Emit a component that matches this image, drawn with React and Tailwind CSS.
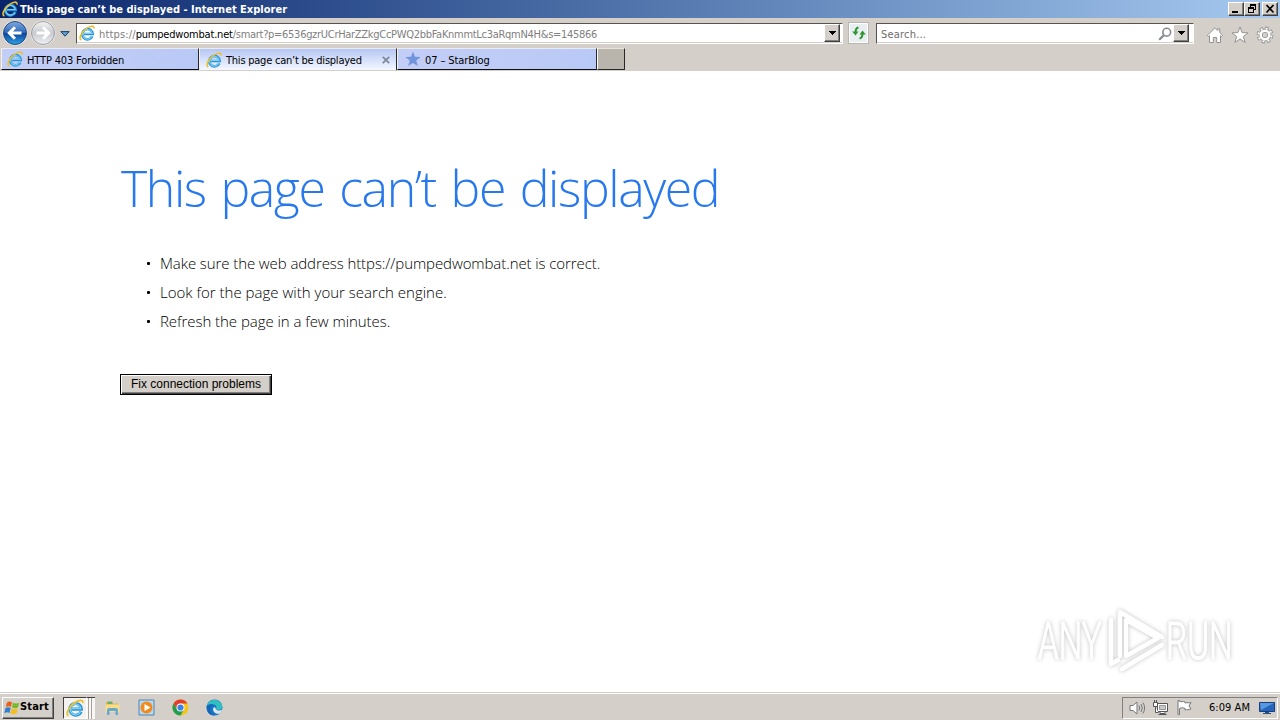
import clsx from "clsx";

const TAHOMA = "font-['DejaVu_Sans_Condensed','DejaVu_Sans',sans-serif]";
const RAISED =
  "bg-[#d4cfc9] border border-t-white border-l-white border-r-[#404040] border-b-[#404040] shadow-[inset_-1px_-1px_0_#808080]";

const suggestions = [
  { text: "Make sure the web address https://pumpedwombat.net is correct.", spacing: "tracking-[-0.09px]" },
  { text: "Look for the page with your search engine.", spacing: "tracking-[0.01px]" },
  { text: "Refresh the page in a few minutes.", spacing: "tracking-[-0.05px]" },
];

function IeLogo({ className }) {
  return (
    <svg viewBox="0 0 16 16" className={clsx("shrink-0", className)} fill="none">
      <path d="M13.300 11.200A5.200 5.200 0 1 1 13.700 9H5" stroke="#2b93d6" strokeWidth="2.700" />
      <path d="M13 10.900A4.800 4.800 0 1 1 13.200 8.500H5" stroke="#79cff5" strokeWidth="1.200" />
      <path d="M2.300 15C-.4 13.800 1.600 8 6.600 4 10.600.8 15.500-.2 15 3.600" stroke="#ecc130" strokeWidth="1.600" />
    </svg>
  );
}

function NavButton({ forward }) {
  return (
    <svg viewBox="0 0 26 26" className="size-[26px] shrink-0">
      <defs>
        <linearGradient id="backFill" x2="0" y2="1">
          <stop offset="0" stopColor="#7fa9de" />
          <stop offset=".48" stopColor="#2f6abb" />
          <stop offset=".52" stopColor="#0d4399" />
          <stop offset="1" stopColor="#2ba4ea" />
        </linearGradient>
        <linearGradient id="forwardFill" x2="0" y2="1">
          <stop offset="0" stopColor="#f4f4f4" />
          <stop offset=".5" stopColor="#c8cacf" />
          <stop offset="1" stopColor="#eef0f2" />
        </linearGradient>
      </defs>
      <circle cx="13" cy="13" r="12.5" fill="#f3f1ee" />
      <circle
        cx="13"
        cy="13"
        r="11.5"
        fill={forward ? "url(#forwardFill)" : "url(#backFill)"}
        stroke={forward ? "#989ba1" : "#27477e"}
      />
      <path
        d="M13 7.3 7.300 13l5.700 5.700M8 13H19.500"
        fill="none"
        stroke="#fff"
        strokeWidth="3"
        transform={forward ? "matrix(-1 0 0 1 26 0)" : undefined}
      />
    </svg>
  );
}

function DropButton() {
  return (
    <button className={clsx("flex h-[18px] w-[16px] shrink-0 items-center justify-center", RAISED)}>
      <svg viewBox="0 0 7 4" className="h-[4px] w-[7px]" shapeRendering="crispEdges">
        <path d="M0 0h7v1H6v1H5v1H4v1H3V3H2V2H1V1H0z" />
      </svg>
    </button>
  );
}

function TitleBar() {
  return (
    <header className="flex h-[18px] items-center bg-linear-to-r from-[#0a246a] to-[#a6caf0] pl-[2px] pr-[2px]">
      <IeLogo className="size-4" />
      <h1 className="ml-[2px] grow whitespace-nowrap pt-px text-[11px] font-bold leading-[17px] tracking-[0.01px] text-white">
        This page can’t be displayed - Internet Explorer
      </h1>
      <div className="flex">
        <button className={clsx("h-[14px] w-[16px]", RAISED)}>
          <svg viewBox="0 0 14 12" className="h-[12px] w-[14px]" shapeRendering="crispEdges">
            <path d="M3 8h6v2H3z" />
          </svg>
        </button>
        <button className={clsx("h-[14px] w-[16px]", RAISED)}>
          <svg viewBox="0 0 14 12" className="h-[12px] w-[14px]" shapeRendering="crispEdges">
            <path d="M5 1h6v6H9V6h1V3H6v1H5zM3 4h6v6H3zM4 6v3h4V6z" fillRule="evenodd" />
          </svg>
        </button>
        <button className={clsx("ml-[2px] h-[14px] w-[16px]", RAISED)}>
          <svg viewBox="0 0 14 12" className="h-[12px] w-[14px]">
            <path d="m3.500 2 7 7.500M10.500 2l-7 7.500" stroke="#000" strokeWidth="1.700" />
          </svg>
        </button>
      </div>
    </header>
  );
}

function Toolbar() {
  return (
    <div className="flex h-[30px] items-start pl-[2px]">
      <div className="flex gap-[2px] pt-[2px]">
        <NavButton />
        <NavButton forward />
      </div>
      <svg viewBox="0 0 10 6" className="ml-[4px] mt-[13px] h-[6px] w-[10px]">
        <path d="M.8.6h8.400L5 5.200z" fill="#5f9ccb" stroke="#14456f" />
      </svg>

      <div className="ml-[6px] mt-[5px] flex h-[21px] w-[767px] border border-b-white border-l-[#57534f] border-r-white border-t-[#57534f] bg-white pl-[2px] pr-[2px] shadow-[inset_0_-1px_0_#d4cfc9]">
        <IeLogo className="mt-[1px] size-4" />
        <p className="ml-[4px] grow whitespace-nowrap text-[11px] leading-[21px] tracking-[-0.29px] text-[#808080]">
          <span className="tracking-[0.15px]">https://</span>
          <span className="tracking-[-0.2px] text-black">pumpedwombat.net</span>
          /smart?p=6536gzrUCrHarZZkgCcPWQ2bbFaKnmmtLc3aRqmN4H&s=145866
        </p>
        <DropButton />
      </div>

      <button className="ml-[5px] mt-[4px] flex h-[22px] w-[21px] items-center justify-center border border-[#b9b6b0] bg-[#e9eef2] shadow-[inset_0_0_0_1px_#fff]">
        <svg viewBox="0 0 16 14" className="h-[14px] w-[16px]" fill="none">
          <path d="M7.500 1.500Q4.500 2 4.500 6.500M8.500 12.500Q11.500 12 11.500 7.500" stroke="#2c9630" strokeWidth="2" />
          <path d="M1.200 5.500h6.300L4.500 9.500zM8.500 8.500h6.300L11.500 4.500z" fill="#2c9630" />
        </svg>
      </button>

      <div className="ml-[7px] mt-[5px] flex h-[21px] w-[318px] border border-b-white border-l-[#57534f] border-r-white border-t-[#57534f] bg-white pl-[4px] pr-[4px] shadow-[inset_0_-1px_0_#d4cfc9]">
        <p className="grow text-[11px] leading-[21px] tracking-[0.2px] text-[#6d6d6d]">Search...</p>
        <svg viewBox="0 0 14 14" className="mr-[1px] mt-[3px] size-[14px]" fill="none" stroke="#85888d">
          <circle cx="8.700" cy="5.200" r="3.900" strokeWidth="1.600" />
          <path d="M5.800 8.200 1.200 12.800" strokeWidth="2.200" />
        </svg>
        <DropButton />
      </div>

      <div className="ml-[12px] mt-[8px] flex gap-[7px]">
        <svg viewBox="0 0 18 18" className="size-[18px]" fill="#fff" stroke="#949290">
          <path d="M9 1.800 1.300 9.300l1.200 1.200 1-.9v6.900h3.800v-5h3.400v5h3.800V9.600l1 .9 1.200-1.200-3-2.900V2.800h-2v1.700z" />
        </svg>
        <svg viewBox="0 0 18 18" className="size-[18px]" fill="#fff" stroke="#949290">
          <path d="m9 1 2.100 5.600 6 .2-4.700 3.700 1.700 5.900L9 13l-5.100 3.400 1.700-5.900L.9 6.800l6-.2z" />
        </svg>
        <svg viewBox="0 0 18 18" className="size-[18px]" fill="none">
          <circle cx="9" cy="9" r="6.800" stroke="#8a8a8a" strokeWidth="3.200" strokeDasharray="3.200 2.140" />
          <circle cx="9" cy="9" r="4.300" stroke="#8a8a8a" strokeWidth="4.200" />
          <circle cx="9" cy="9" r="6.600" stroke="#fff" strokeWidth="2" strokeDasharray="2 3.184" strokeDashoffset="-.5" />
          <circle cx="9" cy="9" r="4.300" stroke="#fff" strokeWidth="2.600" />
          <circle cx="9" cy="9" r="2.200" fill="#d4cfc9" />
        </svg>
      </div>
    </div>
  );
}

function Tab({ active, icon, children, className }) {
  return (
    <div
      className={clsx(
        "flex h-[22px] items-center border-l border-r border-t border-l-[#f4f2ee] border-r-[#28282c] border-t-[#e8eaf4] whitespace-nowrap text-[11px] leading-[16px]",
        active
          ? "bg-linear-to-b from-[#b6c7f3] to-[#f5f8ff]"
          : "border-b border-b-[#101014] bg-linear-to-r from-[#c3cef7] to-[#b9c9f5]",
        className
      )}
    >
      {icon}
      {children}
    </div>
  );
}

function TabStrip() {
  return (
    <div className="flex h-[23px] items-start pl-px">
      <Tab className="w-[198px] pl-[5px]" icon={<IeLogo className="mr-[4px] size-4" />}>
        <span className="pt-[3px] tracking-[-0.15px]">HTTP 403 Forbidden</span>
      </Tab>
      <Tab active className="w-[198px] pl-[6px]" icon={<IeLogo className="mr-[4px] size-4" />}>
        <span className="grow pt-[2px] tracking-[-0.23px]">This page can’t be displayed</span>
        <svg viewBox="0 0 8 8" className="mr-[6px] size-[8px]">
          <path d="m.8.8 6.400 6.400M7.200.8.8 7.200" stroke="#7d8799" strokeWidth="1.700" />
        </svg>
      </Tab>
      <Tab
        className="w-[200px] pl-[7px]"
        icon={
          <svg viewBox="0 0 16 16" className="mr-[4px] size-4">
            <path d="m8 .5 2 5.300 5.700.2-4.500 3.500 1.600 5.600L8 11.900l-4.800 3.200 1.600-5.600L.3 6 6 5.800z" fill="#7194dc" />
          </svg>
        }
      >
        <span className="pt-[3px] tracking-[-0.1px]">07 – StarBlog</span>
      </Tab>
      <div className="h-[22px] w-[28px] border border-b-[#28282c] border-l-white border-r-[#28282c] border-t-[#e8e5df] bg-[#b9b4ac]" />
    </div>
  );
}

function Watermark() {
  return (
    <svg
      viewBox="0 0 220 86"
      className="absolute bottom-[6px] right-[30px] h-[86px] w-[220px] drop-shadow-[0_0_2px_rgba(0,0,0,0.25)]"
      fill="#fff"
    >
      <g fontFamily="Roboto, sans-serif" fontSize="52" stroke="#fff" strokeWidth="1.200">
        <text transform="translate(8 59) scale(.635 1)">ANY</text>
        <text transform="translate(136 59) scale(.64 1)">RUN</text>
      </g>
      <g fill="none" stroke="#fff" strokeWidth="4.500" strokeLinejoin="round" strokeLinecap="round">
        <path d="M90 38V12l42 25M90 12v44M96 56l32-18-32-18v36" />
        <path d="M81 20v44l7-4M92 69l40-24" />
      </g>
    </svg>
  );
}

function ErrorPage() {
  return (
    <main className="relative h-[621px] bg-white pl-[120px] pt-[82px] font-['Open_Sans','Noto_Sans',sans-serif] font-light">
      <h2 className="ml-px whitespace-nowrap text-[50px] leading-[70px] tracking-[-1.4px] text-[#2778ec] [word-spacing:3.1px]">
        This page can’t be displayed
      </h2>
      <ul className="mt-[26px] text-[15px] leading-[29px] text-black">
        {suggestions.map(({ text, spacing }) => (
          <li key={text} className="flex items-center whitespace-nowrap pl-[27px]">
            <span className="mr-[10px] size-[3px] rounded-[1px] bg-black" />
            <span className={spacing}>{text}</span>
          </li>
        ))}
      </ul>
      <button className="mt-[38px] flex h-[21px] w-[152px] items-center justify-center border border-black bg-[#d4cfc9] pb-[2px] font-['Liberation_Sans',sans-serif] text-[12px] font-normal text-black shadow-[inset_1px_1px_0_#fff,inset_-1px_-1px_0_#404040,inset_-2px_-2px_0_#808080]">
        Fix connection problems
      </button>
      <Watermark />
    </main>
  );
}

function StartFlag() {
  return (
    <svg viewBox="0 0 16 16" className="size-4 shrink-0">
      <path d="M3 2.500C5 1 6.500 1.500 8 2.300L6.900 7C5.300 6 3.600 6.200 1.800 7z" fill="#e8601c" />
      <path d="M9 2.800c2 1 4 1 6.200 0L14 7.500c-2 1-4 .8-6 0z" fill="#79b82c" />
      <path d="M1.500 8c2-1 3.500-.8 5.200.1L5.500 13C4 12 2.300 12.100.3 13z" fill="#2f7fd0" />
      <path d="M7.700 8.500c2 1 4 1 6.100.1L12.500 13.500c-2 1-4 .7-6 0z" fill="#f4bd22" />
    </svg>
  );
}

function Taskbar() {
  return (
    <footer className="flex h-[28px] items-center border-t border-[#d4cfc9] bg-[#d4cfc9] pr-[2px] shadow-[inset_0_1px_0_#fff]">
      <button
        className={clsx("ml-[2px] mt-[2px] flex h-[22px] w-[52px] items-center pl-px text-[11px] font-bold tracking-[0.15px]", RAISED)}
      >
        <StartFlag />
        Start
      </button>
      <div className="ml-[9px] mt-[2px] flex h-[22px] w-[24px] items-center border border-b-white border-l-[#404040] border-r-white border-t-[#404040] bg-[#f4f2ee] pl-[2px]">
        <IeLogo className="size-[18px]" />
      </div>
      <div className="mt-[2px] flex h-[22px] w-[8px] gap-[2px] border-t border-[#404040] bg-[#f8f7f5] pl-px">
        <span className="w-px bg-[#a5a19b]" />
        <span className="w-px bg-[#a5a19b]" />
      </div>

      <div className="ml-[9px] mt-[2px] flex items-center gap-[17px]">
        <svg viewBox="0 0 17 17" className="size-[17px]">
          <path d="M2 3h5l1 1.500h6V13H2z" fill="#e3b64b" />
          <path d="M3.500 2.500h5V5h-5z" fill="#6cae67" />
          <path d="M1.500 5.500h14V13h-14z" fill="#f7de8b" />
          <path d="M3 16v-5q0-2 2-2h7q2 0 2 2v5h-2.500v-4h-6v4z" fill="#68a9cf" />
        </svg>
        <svg viewBox="0 0 17 17" className="size-[17px]">
          <path d="M1 1h15v15H1z" fill="#b9d8ee" stroke="#4c85b8" />
          <circle cx="8.500" cy="8.500" r="6" fill="#f18a1c" />
          <path d="M6.500 5v7l6-3.500z" fill="#fff" />
        </svg>
        <svg viewBox="0 0 17 17" className="size-[17px]">
          <circle cx="8.500" cy="8.500" r="8" fill="#f4c51d" />
          <path d="M1.570 4.500A8 8 0 0 1 15.430 4.500H8.500L5.040 10.500z" fill="#e33e2d" />
          <path d="M1.570 4.500A8 8 0 0 0 8.500 16.500L11.960 10.500H5.040z" fill="#219d50" />
          <circle cx="8.500" cy="8.500" r="4" fill="#fff" />
          <circle cx="8.500" cy="8.500" r="3.100" fill="#3f7fe8" />
        </svg>
        <svg viewBox="0 0 17 17" className="size-[17px]">
          <circle cx="8.500" cy="8.500" r="8" fill="#1675c8" />
          <path d="M.7 7C2-1 15-1.500 16.400 7.500c.2 3.500-4.500 4.200-6.500 2.700 1.300-2 .3-5-3.100-5C4 5.200 1.700 6.200.7 7z" fill="#32bfc1" />
          <path d="M9.900 10.200c1.500 1.800 4.600 1.500 6.300.2-.2 1.700-1.500 3.400-2.900 4.300-4 .6-7-2.300-6-5.700.5-1.100 1.500-1 2-.5 0 0 .2.900.6 1.700z" fill="#e2e8e8" />
          <path d="M5.700 7c-3 2.500-1.200 8 3 9.500C3.500 17 .2 12.500.7 7c1.300-1.600 4-2.200 6.500-1.700z" fill="#1765b5" />
        </svg>
      </div>

      <div className="ml-auto mt-[2px] flex h-[22px] w-[156px] items-center border border-b-white border-l-[#808080] border-r-white border-t-[#808080] pl-[6px]">
        <svg viewBox="0 0 16 16" className="size-4" fill="none" stroke="#77777b">
          <path d="M1 5.500h3L8 2v12l-4-3.500H1z" fill="#fff" />
          <path d="M10 5.500q1.500 2.500 0 5M12 4q2.600 4 0 8M14 2.500q3.200 5.500 0 11" />
        </svg>
        <svg viewBox="0 0 17 17" className="ml-[7px] size-[17px]" fill="#fff" stroke="#55555a">
          <path d="M5.500 4.500h10v8h-10zM8 12.500v2h5v-2M6.500 15.500h8" />
          <path d="M7.500 6.500h6v4h-6z" fill="#c9c9c9" stroke="#999" />
          <path d="M1.500 3.500h4v4h-4zM2.500 3V1M4.500 3V1M3.500 8v5.500h3" />
        </svg>
        <svg viewBox="0 0 17 17" className="ml-[7px] size-[17px]" fill="#fff" stroke="#77777b">
          <path d="M2 1.500v14h1.500v-6c2-1 4-1 5.500 0v1.500c2-1 3 .5 6-1l-2-3 2-3.500c-2 1-4-.5-6 .5V3C7 2 5 3 3.500 2.500v-1z" />
        </svg>
        <time className="ml-[16px] whitespace-nowrap pt-px text-[11px] tracking-[0.05px]">6:09 AM</time>
        <svg viewBox="0 0 17 14" className="ml-auto mr-px h-[14px] w-[17px]">
          <path d="M.5 1.500h15v9H.5z" fill="#2765bc" stroke="#173e79" />
          <path d="M1 2h14L2 9z" fill="#5a98e0" />
          <path d="M6 11h4v1h2v1H4v-1h2z" fill="#2a4d79" />
        </svg>
      </div>
    </footer>
  );
}

export default function App() {
  return (
    <div className={clsx("flex h-[720px] w-[1280px] flex-col overflow-hidden bg-[#d4cfc9] text-black", TAHOMA)}>
      <TitleBar />
      <Toolbar />
      <TabStrip />
      <ErrorPage />
      <Taskbar />
    </div>
  );
}
